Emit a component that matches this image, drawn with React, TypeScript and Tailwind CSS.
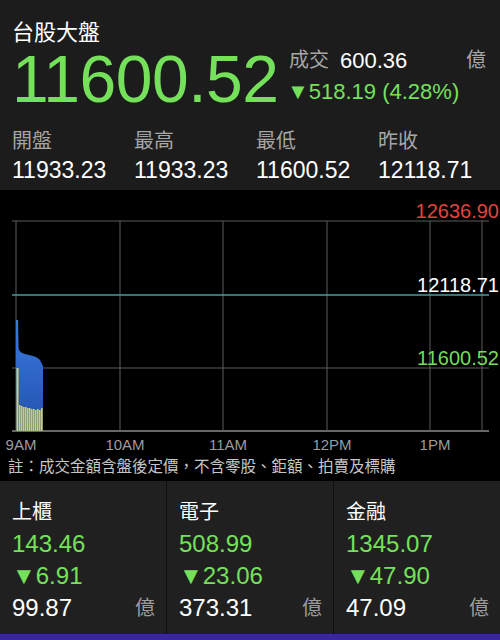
import React from 'react'

const font = { fontFamily: '"Liberation Sans", "Noto Sans CJK TC", sans-serif' }

const stats = [
    { label: '開盤', value: '11933.23' },
    { label: '最高', value: '11933.23' },
    { label: '最低', value: '11600.52' },
    { label: '昨收', value: '12118.71' },
]

const sectors = [
    { name: '上櫃', price: '143.46', change: '6.91', volume: '99.87' },
    { name: '電子', price: '508.99', change: '23.06', volume: '373.31' },
    { name: '金融', price: '1345.07', change: '47.90', volume: '47.09' },
]

const verticals = [16, 120, 223, 327, 430, 482]
const times = [
    { t: '9AM', x: 21 },
    { t: '10AM', x: 125 },
    { t: '11AM', x: 228 },
    { t: '12PM', x: 332 },
    { t: '1PM', x: 435 },
]

// volume bars under the price area
const bars = [215, 216, 217, 217, 218, 218, 219, 219, 220, 219, 220, 218]

const Chart = () => (
    <svg width="500" height="262" viewBox="0 0 500 262" className="block">
        <defs>
            <linearGradient id="area" x1="0" y1="0" x2="0" y2="1">
                <stop offset="0" stopColor="#3b7ae0" />
                <stop offset="1" stopColor="#2150ae" />
            </linearGradient>
        </defs>
        {[31, 178].map((y) => (
            <line key={y} x1="12" x2="489" y1={y} y2={y} stroke="#5c5c5c" strokeWidth="1" />
        ))}
        <line x1="12" x2="489" y1="241" y2="241" stroke="#8a8a8a" strokeWidth="1.5" />
        {verticals.map((x) => (
            <line key={x} x1={x} x2={x} y1="31" y2="241" stroke="#5c5c5c" strokeWidth="1" />
        ))}
        <line x1="12" x2="489" y1="105" y2="105" stroke="#4a9c9c" strokeWidth="1.5" />

        <path
            d="M16,241 L16,130 L18,130 L18.6,159 Q20,163 25,164 L31,165.5 Q37,166.5 40,170 L43,176 L43,241 Z"
            fill="url(#area)"
        />
        <rect x="16.5" y="178" width="2" height="63" fill="#d6d650" />
        {bars.map((top, i) => (
            <rect key={i} x={19 + i * 2} y={top} width="1.6" height={241 - top} fill="#d2d24e" />
        ))}

        <text x="499" y="28" textAnchor="end" fontSize="20" fill="#e0443e" style={font}>12636.90</text>
        <text x="499" y="102" textAnchor="end" fontSize="20" fill="#ffffff" style={font}>12118.71</text>
        <text x="499" y="175" textAnchor="end" fontSize="20" fill="#73dc58" style={font}>11600.52</text>

        {times.map((item) => (
            <text key={item.t} x={item.x} y="260" textAnchor="middle" fontSize="15" fill="#9c9c9c" style={font}>
                {item.t}
            </text>
        ))}
    </svg>
)

const App = () => {
    return (
        <div className="w-[500px] h-[640px] bg-black text-white overflow-hidden flex flex-col" style={font}>
            {/* header */}
            <section className="h-[190px] bg-[#1c1c1c] px-3 pt-[19px]">
                <h1 className="text-[22px] leading-[28px] text-white">台股大盤</h1>
                <div className="flex mt-[4px]">
                    <div className="text-[66px] leading-[56px] text-[#75e05a] tracking-[-0.5px] w-[277px]">11600.52</div>
                    <div className="flex-1 -mt-[3px]">
                        <div className="flex items-center text-[20px] leading-[25px]">
                            <span className="text-[#a6a6a6]">成交</span>
                            <span className="ml-[11px] text-[22px] text-white">600.36</span>
                            <span className="ml-auto mr-[2px] text-[#a6a6a6]">億</span>
                        </div>
                        <div className="mt-[6px] text-[22px] leading-[25px] text-[#75e05a] -ml-[2px]">▼518.19 (4.28%)</div>
                    </div>
                </div>
                <div className="grid grid-cols-4 mt-[21px] w-[488px]">
                    {stats.map((s) => (
                        <div key={s.label}>
                            <div className="text-[20px] leading-[26px] text-[#a6a6a6]">{s.label}</div>
                            <div className="text-[23px] leading-[26px] mt-[3px] text-white">{s.value}</div>
                        </div>
                    ))}
                </div>
            </section>

            {/* chart */}
            <section className="bg-black">
                <Chart />
                <p className="text-[15.5px] leading-[29px] text-[#c6c6c6] pl-[8px]">
                    註：成交金額含盤後定價，不含零股、鉅額、拍賣及標購
                </p>
            </section>

            {/* sectors */}
            <section className="flex h-[153px] bg-[#0e0e0e] gap-[1px]">
                {sectors.map((s) => (
                    <div key={s.name} className="flex-1 bg-[#202020] pl-[12px] pr-[11px] pt-[15px]">
                        <div className="text-[20px] leading-[32px] text-white">{s.name}</div>
                        <div className="text-[24px] leading-[32px] text-[#75e05a]">{s.price}</div>
                        <div className="text-[24px] leading-[32px] text-[#75e05a]">▼{s.change}</div>
                        <div className="flex justify-between items-center leading-[32px]">
                            <span className="text-[24px] text-white">{s.volume}</span>
                            <span className="text-[20px] text-[#9c9c9c]">億</span>
                        </div>
                    </div>
                ))}
            </section>
            <div className="flex-1 bg-[#3a25a6]" />
        </div>
    )
}

export default App
